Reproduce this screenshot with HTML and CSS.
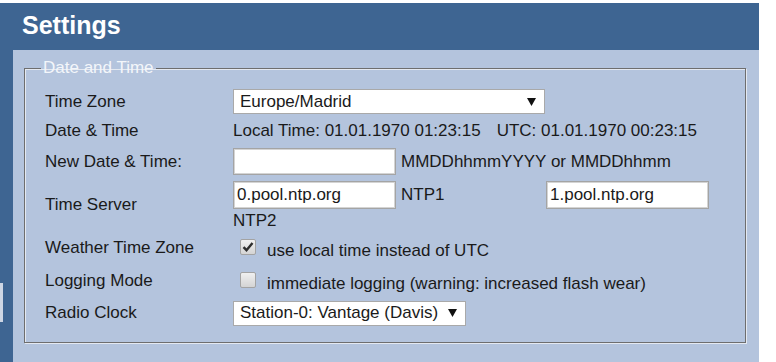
FILE: index.html
```html
<!DOCTYPE html>
<html>
<head>
<meta charset="utf-8">
<link rel="stylesheet" href="styles.css">
</head>
<body>
<div class="page">
  <div class="edge-tab"></div>
  <h1 class="title">Settings</h1>
  <div class="panel">
    <fieldset class="group">
      <legend class="group-title">Date and Time</legend>
      <div class="form">
        <div class="lbl r1">Time Zone</div>
        <div class="val r1">
          <div class="select select-wide"><span class="select-text">Europe/Madrid</span><svg class="arrow" width="9" height="8" viewBox="0 0 9 8"><path d="M0 0 H9 L4.5 8 Z" fill="#111"/></svg></div>
        </div>

        <div class="lbl r2">Date &amp; Time</div>
        <div class="val r2"><span>Local Time: 01.01.1970 01:23:15</span><span class="utc">UTC: 01.01.1970 00:23:15</span></div>

        <div class="lbl r3">New Date &amp; Time:</div>
        <div class="val r3"><span class="input"></span><span class="hint">MMDDhhmmYYYY or MMDDhhmm</span></div>

        <div class="lbl r4">Time Server</div>
        <div class="val r4 server">
          <div class="server-line">
            <span class="input">0.pool.ntp.org</span>
            <span class="ntp1">NTP1</span>
            <span class="input">1.pool.ntp.org</span>
          </div>
          <div class="ntp2">NTP2</div>
        </div>

        <div class="lbl r5">Weather Time Zone</div>
        <div class="val r5 check-cell"><span class="cb"><svg width="14" height="14" viewBox="0 0 14 14"><path d="M2.5 7.2 L5.5 10.2 L11.5 3" fill="none" stroke="#2e2e2e" stroke-width="2.4"/></svg></span><span>use local time instead of UTC</span></div>

        <div class="lbl r6">Logging Mode</div>
        <div class="val r6 check-cell"><span class="cb"></span><span>immediate logging (warning: increased flash wear)</span></div>

        <div class="lbl r7">Radio Clock</div>
        <div class="val r7">
          <div class="select"><span class="select-text">Station-0: Vantage (Davis)</span><svg class="arrow" width="9" height="8" viewBox="0 0 9 8"><path d="M0 0 H9 L4.5 8 Z" fill="#111"/></svg></div>
        </div>
      </div>
    </fieldset>
  </div>
</div>
</body>
</html>
```

FILE: styles.css
```css
html, body {
  margin: 0;
  padding: 0;
  background: #ffffff;
}

body {
  font-family: "Liberation Sans", Arial, sans-serif;
  font-size: 17px;
  color: #1a1a1a;
}

.page {
  position: relative;
  margin-top: 3px;
  width: 746px;
  height: 359px;
  padding-left: 13px;
  background: #3e6592;
  display: flex;
  flex-direction: column;
}

.edge-tab {
  position: absolute;
  left: 0;
  top: 280px;
  width: 3px;
  height: 39px;
  background: #cdd6e4;
}

.title {
  margin: 0;
  height: 44px;
  padding-bottom: 3px;
  padding-left: 9px;
  line-height: 44px;
  font-size: 25px;
  font-weight: bold;
  color: #ffffff;
}

.panel {
  flex: 1;
  background: #b4c4dd;
  padding: 8px 13px 0 11px;
}

.group {
  margin: 0;
  padding: 10px 20px 13px 20px;
  border: 1px solid #6e6e6e;
  box-shadow: inset 1px 1px 0 #e4e9f1, 1px 1px 0 #e4e9f1;
  min-width: 0;
}

.group-title {
  margin-left: -4px;
  padding: 0 2px;
  line-height: 20px;
  color: #f3f6fa;
}

.form {
  display: grid;
  grid-template-columns: 188px 1fr;
  grid-template-rows: 27px 31px 31px 55px 32px 33px 32px;
}

.lbl {
  display: flex;
  align-items: center;
  white-space: nowrap;
}

.val {
  display: flex;
  align-items: center;
  white-space: nowrap;
}

.select {
  display: inline-flex;
  align-items: center;
  height: 23px;
  padding: 0 8px 0 6px;
  background: #ffffff;
  border: 1px solid #a9a9a9;
}

.select-wide {
  width: 296px;
  justify-content: space-between;
}

.select .arrow {
  margin-left: 10px;
}

.utc {
  margin-left: 16px;
}

.input {
  display: inline-flex;
  align-items: center;
  box-sizing: border-box;
  width: 163px;
  height: 28px;
  padding-left: 3px;
  background: #ffffff;
  border: 1px solid #a4a4a4;
  box-shadow: inset 0 0 0 1px #d4d4d4;
}

.r3 .input {
  height: 27px;
}

.hint {
  margin-left: 5px;
}

.server {
  flex-direction: column;
  align-items: flex-start;
  justify-content: flex-start;
  padding-top: 4px;
}

.server-line {
  display: flex;
  align-items: center;
}

.ntp1 {
  width: 145px;
  padding-left: 5px;
}

.ntp2 {
  margin-top: 2px;
  line-height: 20px;
}

.check-cell {
  padding-top: 6px;
}

.r6.check-cell {
  padding-top: 7px;
}

.cb {
  box-sizing: border-box;
  width: 16px;
  height: 16px;
  margin: 0 11px 8px 7px;
  border: 1px solid #a3a3a3;
  border-radius: 2px;
  background: linear-gradient(#f0f0f0, #d4d4d4);
  display: flex;
  align-items: center;
  justify-content: center;
  flex: none;
}
```
